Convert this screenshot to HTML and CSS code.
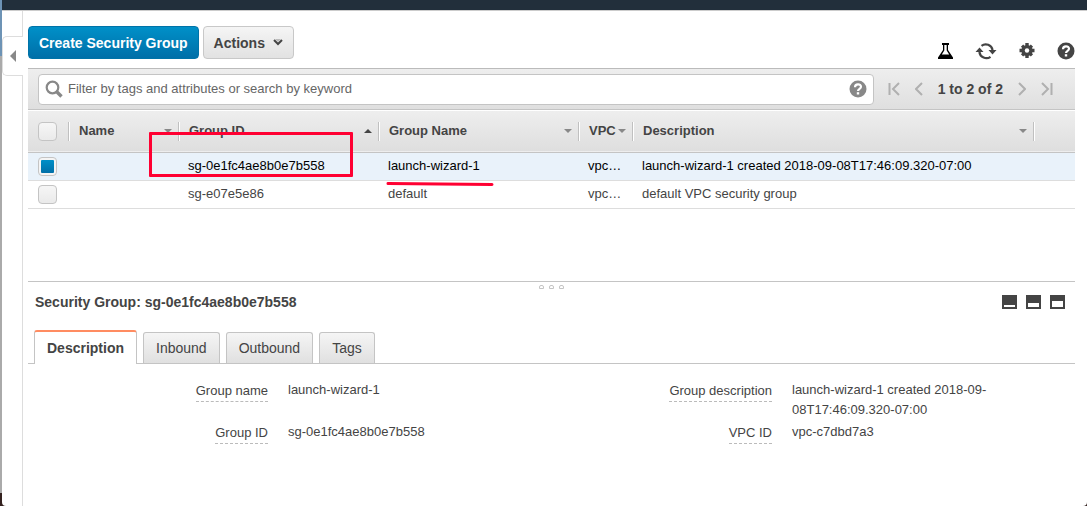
FILE: index.html
```html
<!DOCTYPE html>
<html lang="en">
<head>
<meta charset="utf-8">
<title>Security Groups</title>
<link rel="stylesheet" href="styles.css">
</head>
<body>
<div class="window">
  <header class="topbar"></header>
  <div class="layout">
    <aside class="rail">
      <button class="rail-toggle" type="button" aria-label="Collapse navigation">
        <svg width="6" height="12" viewBox="0 0 6 12"><path d="M6 0v12L0 6z" fill="#888"/></svg>
      </button>
    </aside>
    <main class="content">
      <div class="actions">
        <button class="btn btn-primary" type="button">Create Security Group</button>
        <button class="btn btn-default" type="button">Actions
          <svg width="10" height="7" viewBox="0 0 10 7"><path d="M1 1l4 4 4-4" fill="none" stroke="#444" stroke-width="2"/><path d="M2 0h6L5 3z" fill="#bbb"/></svg>
        </button>
        <div class="tools">
          <button class="icon-btn" type="button" aria-label="Experiments">
            <svg width="18" height="18" viewBox="0 0 18 18"><path d="M6 1h7v2h-1v5l5 7.500V17H2v-1.500L7 8V3H6z" fill="#000"/><path d="M8.300 3h2.400v5.500l2.500 4H5.800l2.500-4z" fill="#fff"/></svg>
          </button>
          <button class="icon-btn" type="button" aria-label="Refresh">
            <svg width="22" height="18" viewBox="0 0 22 18"><g fill="none" stroke="#444" stroke-width="2.200"><path d="M6.500 3.800A7 7 0 0 1 17.600 8"/><path d="M15.500 14.800A7 7 0 0 1 4.400 10"/></g><path d="M13.500 8H21.500L17.500 12.500zM.5 10H8.500L4.500 5.500z" fill="#444"/></svg>
          </button>
          <button class="icon-btn" type="button" aria-label="Settings">
            <svg width="18" height="18" viewBox="0 0 18 18"><g fill="#444"><circle cx="9" cy="8.500" r="5.600"/><path d="M7.300 1h3.400v15H7.300zM1.500 6.800h15v3.400h-15z"/><path d="M7.400 1.500h3.200v14H7.400zM2 6.900h14v3.200H2z" transform="rotate(45 9 8.500)"/></g><circle cx="9" cy="8.500" r="2.200" fill="#fff"/></svg>
          </button>
          <button class="icon-btn" type="button" aria-label="Help">
            <svg width="18" height="18" viewBox="0 0 18 18"><circle cx="9" cy="9" r="8.500" fill="#444"/><path d="M6 7.200C6 3.500 12 3.500 12 6.800 12 8.900 9 8.700 9 11" fill="none" stroke="#fff" stroke-width="2.200"/><rect x="7.800" y="12.200" width="2.400" height="2.300" fill="#fff"/></svg>
          </button>
        </div>
      </div>

      <div class="filterbar">
        <div class="search">
          <svg width="18" height="18" viewBox="0 0 18 18" fill="none" stroke="#888"><circle cx="7.500" cy="7.500" r="5.800" stroke-width="2.200"/><path d="M12 12l4.500 4.500" stroke-width="3.400"/></svg>
          <input class="search-input" type="text" aria-label="Filter security groups" placeholder="Filter by tags and attributes or search by keyword">
          <button class="icon-btn" type="button" aria-label="Search help">
            <svg width="18" height="18" viewBox="0 0 18 18"><circle cx="9" cy="9" r="8.500" fill="#888"/><path d="M6 7.200C6 3.500 12 3.500 12 6.800 12 8.900 9 8.700 9 11" fill="none" stroke="#fff" stroke-width="2.200"/><rect x="7.800" y="12.200" width="2.400" height="2.300" fill="#fff"/></svg>
          </button>
        </div>
        <nav class="pager" aria-label="Pages">
          <button class="icon-btn" type="button" aria-label="First page"><svg width="12" height="14" viewBox="0 0 12 14"><path d="M1.500 1v12M11 1L5 7l6 6" fill="none" stroke="#b0b0b0" stroke-width="2"/></svg></button>
          <button class="icon-btn" type="button" aria-label="Previous page"><svg width="8" height="14" viewBox="0 0 8 14"><path d="M7 1L1 7l6 6" fill="none" stroke="#b0b0b0" stroke-width="2"/></svg></button>
          <span class="pager-text">1 to 2 of 2</span>
          <button class="icon-btn" type="button" aria-label="Next page"><svg width="8" height="14" viewBox="0 0 8 14"><path d="M1 1l6 6-6 6" fill="none" stroke="#b0b0b0" stroke-width="2"/></svg></button>
          <button class="icon-btn" type="button" aria-label="Last page"><svg width="12" height="14" viewBox="0 0 12 14"><path d="M10.500 1v12M1 1l6 6-6 6" fill="none" stroke="#b0b0b0" stroke-width="2"/></svg></button>
        </nav>
      </div>

      <div class="list">
        <table class="grid">
          <colgroup><col class="c-check"><col class="c-name"><col class="c-wide"><col class="c-wide"><col class="c-vpc"><col><col class="c-end"></colgroup>
          <thead>
            <tr>
              <th><input class="check" type="checkbox" aria-label="Select all"></th>
              <th><div class="head">Name<i class="sort"></i></div></th>
              <th><div class="head">Group ID<i class="sort sort-up"></i></div></th>
              <th><div class="head">Group Name<i class="sort"></i></div></th>
              <th><div class="head">VPC<i class="sort"></i></div></th>
              <th><div class="head">Description<i class="sort"></i></div></th>
              <th><div class="head"></div></th>
            </tr>
          </thead>
          <tbody>
            <tr class="selected">
              <td><input class="check" type="checkbox" aria-label="Select launch-wizard-1" checked></td>
              <td></td><td>sg-0e1fc4ae8b0e7b558</td><td>launch-wizard-1</td><td>vpc…</td><td>launch-wizard-1 created 2018-09-08T17:46:09.320-07:00</td><td></td>
            </tr>
            <tr>
              <td><input class="check" type="checkbox" aria-label="Select default"></td>
              <td></td><td>sg-e07e5e86</td><td>default</td><td>vpc…</td><td>default VPC security group</td><td></td>
            </tr>
          </tbody>
        </table>
        <div class="mark-box"></div>
        <svg class="mark-line" width="108" height="6" viewBox="0 0 108 6"><path d="M2 2.500L106 3.500" stroke="#ff0032" stroke-width="3" stroke-linecap="round"/></svg>
      </div>

      <section class="detail">
        <div class="splitter"><i></i><i></i><i></i></div>
        <div class="detail-head">
          <h2>Security Group: sg-0e1fc4ae8b0e7b558</h2>
          <div class="panes">
            <button class="pane pane-low" type="button" aria-label="Minimize details"></button>
            <button class="pane pane-mid" type="button" aria-label="Split view"></button>
            <button class="pane pane-high" type="button" aria-label="Maximize details"></button>
          </div>
        </div>
        <div class="tabs" role="tablist">
          <button class="tab tab-active" type="button" role="tab" aria-selected="true">Description</button>
          <button class="tab" type="button" role="tab">Inbound</button>
          <button class="tab" type="button" role="tab">Outbound</button>
          <button class="tab" type="button" role="tab">Tags</button>
        </div>
        <div class="facts">
          <div class="label"><span>Group name</span></div><div>launch-wizard-1</div>
          <div class="label"><span>Group description</span></div><div>launch-wizard-1 created 2018-09-08T17:46:09.320-07:00</div>
          <div class="label"><span>Group ID</span></div><div>sg-0e1fc4ae8b0e7b558</div>
          <div class="label"><span>VPC ID</span></div><div>vpc-c7dbd7a3</div>
        </div>
      </section>
    </main>
  </div>
</div>
</body>
</html>
```

FILE: styles.css
```css
* { box-sizing: border-box; }

body {
  margin: 0;
  padding-left: 2px;
  background: linear-gradient(#6d93b5 0 56px, #aaa 56px calc(100vh - 13px), #33211f calc(100vh - 13px));
  font: 13px/20px "Liberation Sans", Arial, sans-serif;
  color: #444;
}

button, input { font: inherit; color: inherit; margin: 0; }
button { cursor: pointer; }
svg { display: block; flex: none; }

.window {
  display: flex;
  flex-direction: column;
  min-height: 100vh;
  background: #fff;
  border-radius: 0 0 4px 4px;
}

.topbar { height: 11px; background: #222f3b; border-bottom: 1px solid #ccc; }

.layout { display: flex; flex: 1; }

.rail { flex: none; width: 21px; padding-top: 25px; border-right: 1px solid #ddd; }

.rail-toggle {
  display: flex;
  align-items: center;
  justify-content: center;
  width: 21px;
  height: 40px;
  padding: 0;
  background: #fff;
  border: 1px solid #ddd;
  border-right: 0;
  border-radius: 5px 0 0 5px;
}

.content { flex: 1; min-width: 0; padding: 15px 12px 0 5px; }

.actions { display: flex; gap: 4px; height: 42px; align-items: flex-start; }

.btn {
  display: flex;
  align-items: center;
  gap: 8px;
  height: 33px;
  padding: 0 10px;
  border-radius: 4px;
  font-size: 14px;
  font-weight: bold;
  white-space: nowrap;
}
.btn-primary { background: linear-gradient(#0090c8, #006fa8); border: 1px solid #0073a8; color: #fff; }
.btn-default { background: linear-gradient(#f5f5f5, #e2e2e2); border: 1px solid #c8c8c8; }

.tools { display: flex; gap: 21px; margin: 16px 0 0 auto; }
.icon-btn { display: flex; padding: 0; border: 0; background: none; }

.filterbar {
  display: flex;
  align-items: center;
  height: 42px;
  padding: 0 22px 0 10px;
  border-top: 1px solid #bbb;
  border-bottom: 1px solid #c4c4c4;
  background: linear-gradient(#eee, #dfdfdf);
}

.search {
  display: flex;
  align-items: center;
  flex: 1;
  gap: 5px;
  height: 31px;
  padding: 0 6px;
  background: #fff;
  border: 1px solid #c4c4c4;
  border-radius: 4px;
}
.search-input { flex: 1; min-width: 0; padding: 0; border: 0; outline: 0; background: none; }
.search-input::placeholder { color: #666; opacity: 1; }

.pager { display: flex; align-items: center; gap: 15px; margin-left: 14px; }
.pager-text { font-size: 14px; font-weight: bold; white-space: nowrap; }

.list { position: relative; height: 171px; padding-top: 1px; }

.grid { width: 100%; table-layout: fixed; border-collapse: collapse; }
.c-check { width: 40px; }
.c-name { width: 110px; }
.c-wide { width: 200px; }
.c-vpc { width: 54px; }
.c-end { width: 42px; }

thead tr { height: 41px; background: linear-gradient(#eee, #dedede); border-bottom: 1px solid #c4c4c4; }
tbody tr { height: 28px; border-bottom: 1px solid #ddd; }
th, td { padding: 0; text-align: left; white-space: nowrap; }
td { padding-left: 10px; }
th:first-child, td:first-child { padding-left: 10px; }
.selected { background: #e9f2fa; color: #000; }

.head {
  display: flex;
  align-items: center;
  justify-content: space-between;
  height: 19px;
  padding: 0 6px 0 10px;
  border-left: 1px solid #c0c0c0;
  box-shadow: inset 1px 0 #fff;
}

.sort { border: 4px solid transparent; border-top-color: #888; border-bottom: 0; }
.sort-up { border-top: 0; border-bottom: 4px solid #444; }

.check {
  display: block;
  appearance: none;
  width: 19px;
  height: 19px;
  border: 1px solid #c4c4c4;
  border-radius: 4px;
  background: linear-gradient(#f6f6f6, #eaeaea);
}
.check:checked { padding: 2px; background: linear-gradient(#0090c8, #006fa8) content-box, #f4f4f4; }

.mark-box {
  position: absolute;
  left: 121px;
  top: 22px;
  width: 204px;
  height: 45px;
  border: 3px solid #ff0032;
  border-radius: 1px;
}
.mark-line { position: absolute; left: 358px; top: 71px; }

.detail { border-top: 1px solid #c4c4c4; }
.splitter { display: flex; justify-content: center; gap: 5px; height: 10px; padding-top: 3px; }
.splitter i { width: 5px; height: 4px; border: 1px solid #c4c4c4; border-radius: 2px 2px 0 0; }

.detail-head { display: flex; align-items: center; justify-content: space-between; height: 20px; padding: 0 10px 0 7px; }
h2 { margin: 0; font-size: 14px; line-height: 20px; }

.panes { display: flex; gap: 9px; }
.pane { width: 15px; height: 14px; padding: 0; border: 2px solid #444; border-radius: 0; background: #fff; }
.pane-low { border-top-width: 10px; }
.pane-mid { border-top-width: 8px; }
.pane-high { border-top-width: 6px; }

.tabs {
  display: flex;
  align-items: flex-end;
  gap: 6px;
  height: 52px;
  padding-left: 6px;
  border-bottom: 1px solid #c4c4c4;
}
.tab {
  height: 31px;
  padding: 0 12px;
  border: 1px solid #c4c4c4;
  border-bottom: 0;
  border-radius: 3px 3px 0 0;
  background: linear-gradient(#f5f5f5, #e0e0e0);
  font-size: 14px;
}
.tab-active { height: 34px; margin-bottom: -1px; border-top: 2px solid #ff8c61; background: #fff; font-weight: bold; }

.facts {
  display: grid;
  grid-template-columns: 240fr 244fr 220fr 283fr;
  gap: 2px 20px;
  padding-top: 16px;
}
.facts > div { min-height: 40px; }
.label { text-align: right; }
.label span { display: inline-block; padding-top: 1px; border-bottom: 1px dashed #bbb; }
```
